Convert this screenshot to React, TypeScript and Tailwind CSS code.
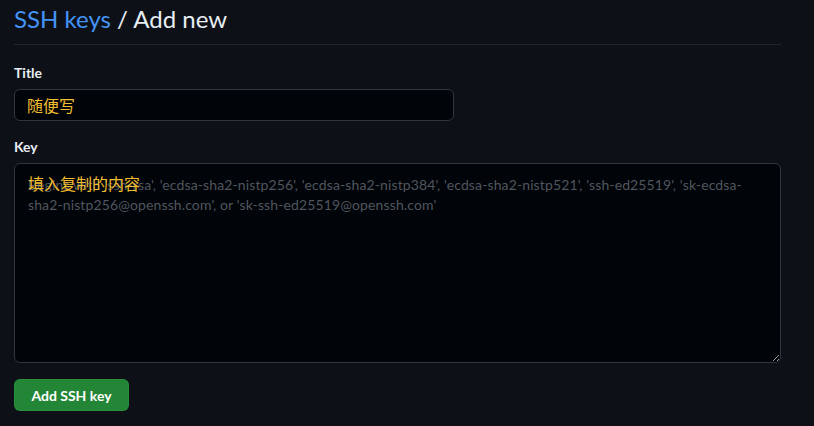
import React from "react";

const placeholder =
  "Begins with 'ssh-rsa', 'ecdsa-sha2-nistp256', 'ecdsa-sha2-nistp384', 'ecdsa-sha2-nistp521', 'ssh-ed25519', 'sk-ecdsa-\nsha2-nistp256@openssh.com', or 'sk-ssh-ed25519@openssh.com'";

export default function App() {
  return (
    <div
      className="min-h-[426px] w-full bg-[#0d1117] text-[#e6edf3] [color-scheme:dark]"
      style={{ fontFamily: 'Lato, "Noto Sans CJK SC", sans-serif' }}
    >
      <div className="w-[767px] ml-[14px]">
        <div className="border-b border-[#21262d] pb-2 mb-4">
          <h1 className="text-[24px] leading-[36px] font-normal pt-[1px] h-[36px]">
            <span className="text-[#4493f8]">SSH keys</span>
            <span className="text-[#e6edf3]"> / Add new</span>
          </h1>
        </div>
        <div className="flex flex-col">
          <label className="text-[14px] leading-[21px] font-bold mt-[1px] mb-[6px]">Title</label>
          <input
            className="w-[440px] h-[32px] rounded-md border border-[#30363d] bg-[#010409] px-3 text-[16px] text-[#f2bd2e] outline-none"
            style={{ fontFamily: '"Noto Sans CJK SC", sans-serif' }}
            defaultValue="随便写"
          />
        </div>
        <div className="flex flex-col mt-[15px]">
          <label className="text-[14px] leading-[21px] font-bold mb-[6px]">Key</label>
          <div className="relative">
            <textarea
              className="block w-full h-[200px] rounded-md border border-[#30363d] bg-[#010409] px-[13px] pt-[11px] text-[14px] leading-[20px] tracking-[0.12px] text-[#e6edf3] placeholder:text-[#50565e] outline-none resize-y"
              placeholder={placeholder}
            />
            <span
              className="absolute left-[14px] top-[9px] text-[16px] leading-[22px] text-[#f2bd2e]"
              style={{ fontFamily: '"Noto Sans CJK SC", sans-serif' }}
            >
              填入复制的内容
            </span>
          </div>
        </div>
        <button className="mt-4 h-[32px] w-[115px] rounded-md bg-[#238636] border border-[#2ea043]/40 text-white text-[14px] font-bold">
          Add SSH key
        </button>
      </div>
    </div>
  );
}
